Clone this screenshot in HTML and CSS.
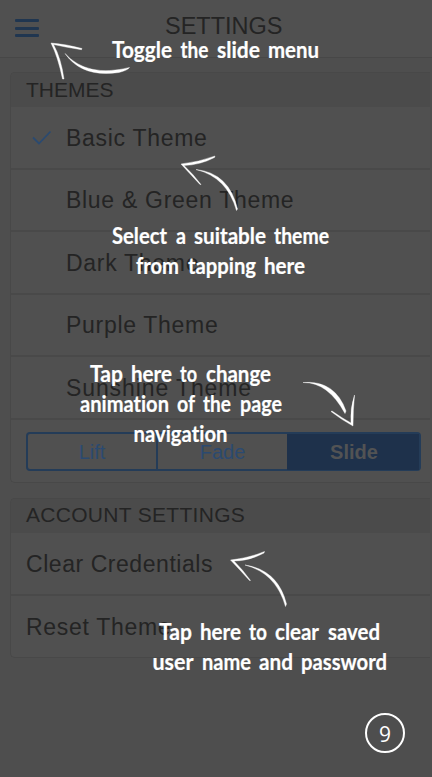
FILE: index.html
```
<!DOCTYPE html>
<html lang="en">
<head>
<meta charset="utf-8">
<title>Settings</title>
<link rel="stylesheet" href="styles.css">
</head>
<body>
<header class="bar">
  <div class="menu"><i></i><i></i><i></i></div>
  <h1>SETTINGS</h1>
</header>
<main>
  <section class="card">
    <h2>THEMES</h2>
    <ul class="themes">
      <li><svg class="check" viewBox="0 0 20 16"><path d="M1 7.5 7 13.5 18.5 1.5"/></svg><span>Basic Theme</span></li>
      <li><span>Blue &amp; Green Theme</span></li>
      <li><span>Dark Theme</span></li>
      <li><span>Purple Theme</span></li>
      <li class="wide"><span>Sunshine Theme</span></li>
    </ul>
    <div class="segments"><span>Lift</span><span>Fade</span><span class="active">Slide</span></div>
  </section>
  <section class="card account">
    <h2>ACCOUNT SETTINGS</h2>
    <ul>
      <li class="tight"><span>Clear Credentials</span></li>
      <li><span>Reset Theme</span></li>
    </ul>
  </section>
</main>
<svg class="guide" viewBox="0 0 432 777">
  <g class="arrows">
    <path d="M51 43Q66 44 82 48.5L81.500 49.700Q67 47.500 53.500 44.500Q61 58 64 79L62.500 79Q58 57 51 43Z"/>
    <path d="M65 53.500Q87 78 129.500 67.500Q128 70 119 72.500Q82 78 65 53.500Z"/>
    <path d="M181 164Q199 162 215 156L214.500 157.500Q200 165 184 165.500Q193 174 201 184.500L200 184.500Q192 176 181 164Z"/>
    <path d="M196 169.500Q229 173 237.500 209L236.500 210.500Q227 177 196 169.500Z"/>
    <path d="M303 382.500Q335 380 346 411L345 413.500Q328 382 303 382.500Z"/>
    <path d="M354.500 395Q353 410 353 426Q342 420 331 411.500L332 411Q342 418 351 423Q350 408 354.500 395Z"/>
    <path d="M230.500 560Q249 558 264.500 551.500L264 553Q249 561 234 561Q243 570 250.500 580.500L249.500 580.500Q241 571 230.500 560Z"/>
    <path d="M245 565Q278 570 286.500 604L285.500 606.500Q276 573 245 565Z"/>
  </g>
  <g class="note">
    <text x="112" y="58" textLength="60" lengthAdjust="spacingAndGlyphs">Toggle</text>
    <text x="180.500" y="58" textLength="28" lengthAdjust="spacingAndGlyphs">the</text>
    <text x="217" y="58" textLength="43" lengthAdjust="spacingAndGlyphs">slide</text>
    <text x="268" y="58" textLength="51" lengthAdjust="spacingAndGlyphs">menu</text>
    <text x="112" y="244" textLength="55" lengthAdjust="spacingAndGlyphs">Select</text>
    <text x="176" y="244" textLength="10" lengthAdjust="spacingAndGlyphs">a</text>
    <text x="194" y="244" textLength="72" lengthAdjust="spacingAndGlyphs">suitable</text>
    <text x="274" y="244" textLength="55" lengthAdjust="spacingAndGlyphs">theme</text>
    <text x="136" y="274" textLength="43" lengthAdjust="spacingAndGlyphs">from</text>
    <text x="188" y="274" textLength="68" lengthAdjust="spacingAndGlyphs">tapping</text>
    <text x="264" y="274" textLength="41" lengthAdjust="spacingAndGlyphs">here</text>
    <text x="90" y="382" textLength="33" lengthAdjust="spacingAndGlyphs">Tap</text>
    <text x="131" y="382" textLength="41" lengthAdjust="spacingAndGlyphs">here</text>
    <text x="180" y="382" textLength="17" lengthAdjust="spacingAndGlyphs">to</text>
    <text x="206" y="382" textLength="65" lengthAdjust="spacingAndGlyphs">change</text>
    <text x="80" y="412" textLength="89" lengthAdjust="spacingAndGlyphs">animation</text>
    <text x="177" y="412" textLength="18" lengthAdjust="spacingAndGlyphs">of</text>
    <text x="203" y="412" textLength="28" lengthAdjust="spacingAndGlyphs">the</text>
    <text x="240" y="412" textLength="42" lengthAdjust="spacingAndGlyphs">page</text>
    <text x="133.500" y="442" textLength="94" lengthAdjust="spacingAndGlyphs">navigation</text>
    <text x="159" y="640" textLength="33" lengthAdjust="spacingAndGlyphs">Tap</text>
    <text x="200" y="640" textLength="41" lengthAdjust="spacingAndGlyphs">here</text>
    <text x="249" y="640" textLength="18" lengthAdjust="spacingAndGlyphs">to</text>
    <text x="275" y="640" textLength="44" lengthAdjust="spacingAndGlyphs">clear</text>
    <text x="328" y="640" textLength="52" lengthAdjust="spacingAndGlyphs">saved</text>
    <text x="152.500" y="670" textLength="41" lengthAdjust="spacingAndGlyphs">user</text>
    <text x="202" y="670" textLength="49" lengthAdjust="spacingAndGlyphs">name</text>
    <text x="259" y="670" textLength="34" lengthAdjust="spacingAndGlyphs">and</text>
    <text x="301" y="670" textLength="86" lengthAdjust="spacingAndGlyphs">password</text>
  </g>
</svg>
<div class="step">9</div>
</body>
</html>
```
FILE: styles.css
```
* { box-sizing: border-box; }
body {
  margin: 0;
  width: 432px;
  height: 777px;
  overflow: hidden;
  position: relative;
  background: #4e4e4e;
  color: #242424;
  font-family: "Liberation Sans", Arial, sans-serif;
}
h1, h2, ul { margin: 0; padding: 0; font-weight: 400; }
.bar {
  height: 58px;
  display: grid;
  grid-template-columns: 165px 1fr;
  background: #505050;
  border-bottom: 1px solid #474747;
}
.menu {
  display: flex;
  flex-direction: column;
  gap: 4px;
  padding: 19px 0 0 15px;
}
.menu i { width: 24px; height: 3px; border-radius: 1px; background: #203650; }
.menu i:nth-child(2) { margin-top: 1px; }
h1 { font-size: 23.5px; line-height: 27px; padding-top: 13px; }
main { padding: 14px 2px 0 10px; }
.card {
  border: 1px solid #484848;
  border-right: 0;
  border-radius: 5px 0 0 5px;
  background: #505050;
  overflow: hidden;
}
.account { margin-top: 15px; }
h2 {
  height: 34px;
  padding-left: 15px;
  font-size: 21px;
  line-height: 34px;
  background: #4b4b4b;
}
.account h2 { height: 34.500px; letter-spacing: .3px; line-height: 32px; }
ul { list-style: none; }
li {
  height: 62.500px;
  display: flex;
  align-items: center;
  padding: 2px 0 0 15px;
  font-size: 23px;
  letter-spacing: .7px;
  border-bottom: 2px solid #494949;
}
.wide { letter-spacing: .9px; }
.tight { letter-spacing: .55px; }
.themes li span { padding-left: 40px; }
.check {
  width: 20px;
  height: 16px;
  margin: 0 -26px 0 6px;
  fill: none;
  stroke: #2b4a70;
  stroke-width: 1.8;
}
.account li:last-child { border-bottom: 0; height: 61px; }
.segments {
  display: grid;
  grid-template-columns: 128px 131px 1fr;
  height: 39px;
  margin: 12px 9px 11px 15px;
  border: 2px solid #243c58;
  border-radius: 4px;
  color: #2b4a70;
  font-size: 20px;
  line-height: 36px;
  text-align: center;
}
.segments span + span { border-left: 2px solid #243c58; }
.segments .active { background: #1e314b; border-color: #1e314b; color: #525354; font-weight: 700; }
.guide { position: absolute; inset: 0; width: 432px; height: 777px; fill: #fff; }
.arrows { stroke: #fff; stroke-width: .4; }
.note {
  font: 700 22px Lato, sans-serif;
  font-variant-ligatures: none;
  stroke: #fff;
  stroke-width: .2;
}
.step {
  position: absolute;
  left: 365px;
  top: 713px;
  width: 40px;
  height: 40px;
  border: 2px solid #fff;
  border-radius: 50%;
  color: #fff;
  font: 500 21px/38px "Open Sans", sans-serif;
  text-align: center;
}
```
